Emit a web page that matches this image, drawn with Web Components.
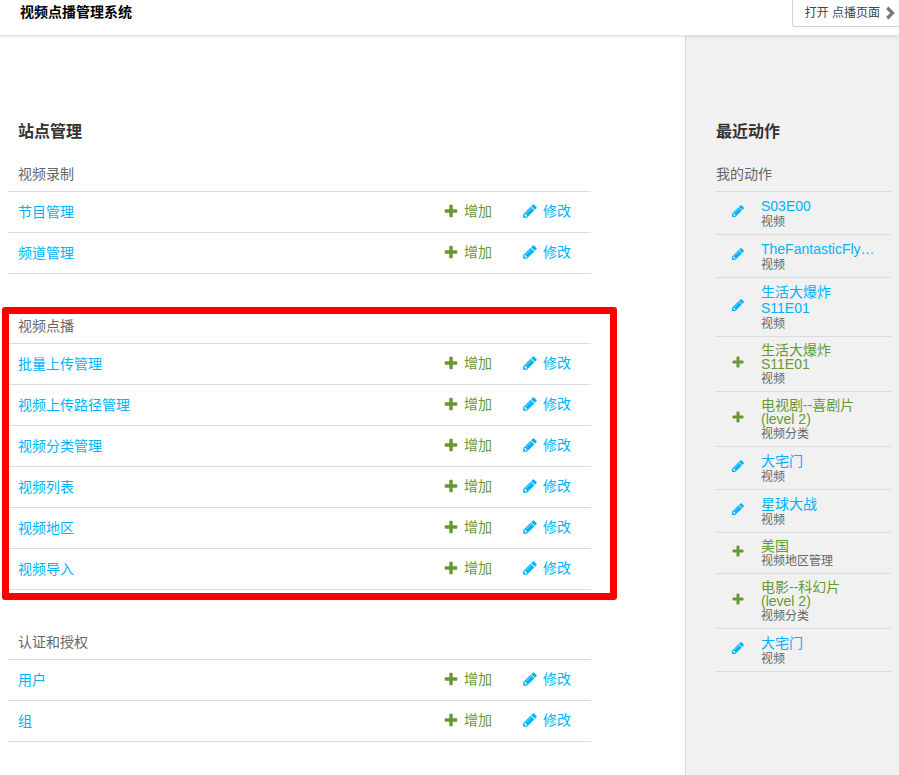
<!DOCTYPE html>
<html lang="zh-CN">
<head>
<meta charset="utf-8">
<meta name="viewport" content="width=device-width, initial-scale=1">
<title>视频点播管理系统</title>
<style>
  body {
    margin: 0;
    color: #666;
    background: #fff;
    font: 14px/16px "Liberation Sans", "Noto Sans CJK SC", sans-serif;
    --link: #00b2ff;
    --add: #669933;
    --line: #dbdbdb;
  }
</style>
</head>
<body>
<admin-page>
  <admin-header slot="header">
    视频点播管理系统
    <open-link slot="tools" href="#vod">打开 点播页面</open-link>
  </admin-header>
  <span slot="title">站点管理</span>
  <module-group name="视频录制" items="节目管理,频道管理"></module-group>
  <module-group name="视频点播" items="批量上传管理,视频上传路径管理,视频分类管理,视频列表,视频地区,视频导入" marked></module-group>
  <module-group name="认证和授权" items="用户,组"></module-group>
  <recent-actions slot="aside">
    <span slot="title">最近动作</span>
    <span slot="subtitle">我的动作</span>
    <action-entry kind="edit" type="视频">S03E00</action-entry>
    <action-entry kind="edit" type="视频">TheFantasticFly…</action-entry>
    <action-entry kind="edit" type="视频">生活大爆炸<br>S11E01</action-entry>
    <action-entry kind="add" type="视频">生活大爆炸<br>S11E01</action-entry>
    <action-entry kind="add" type="视频分类">电视剧--喜剧片<br>(level 2)</action-entry>
    <action-entry kind="edit" type="视频">大宅门</action-entry>
    <action-entry kind="edit" type="视频">星球大战</action-entry>
    <action-entry kind="add" type="视频地区管理">美国</action-entry>
    <action-entry kind="add" type="视频分类">电影--科幻片<br>(level 2)</action-entry>
    <action-entry kind="edit" type="视频">大宅门</action-entry>
  </recent-actions>
</admin-page>

<script>
class BaseElement extends HTMLElement {
  connectedCallback() {
    if (!this.shadowRoot) this.attachShadow({ mode: "open" }).innerHTML = this.render();
  }
}

const ICONS = {
  edit: ["0 0 1792 1792", "M491 1536l91-91-235-235-91 91v107h128v128h107zm523-928q0-22-22-22-10 0-17 7l-542 542q-7 7-7 17 0 22 22 22 10 0 17-7l542-542q7-7 7-17zm-54-192l416 416-832 832h-416v-416zm683 96q0 53-37 90l-166 166-416-416 166-165q36-38 90-38 53 0 91 38l235 234q37 39 37 91z"],
  add: ["0 0 1792 1792", "M1600 796v192q0 40-28 68t-68 28h-416v416q0 40-28 68t-68 28h-192q-40 0-68-28t-28-68v-416h-416q-40 0-68-28t-28-68v-192q0-40 28-68t68-28h416v-416q0-40 28-68t68-28h192q40 0 68 28t28 68v416h416q40 0 68 28t28 68z"],
  next: ["0 0 16 16", "M5.4 1.6L11.8 8l-6.4 6.4-2.3-2.3L7.2 8 3.1 3.9z"]
};

customElements.define("ui-icon", class extends BaseElement {
  render() {
    const [box, path] = ICONS[this.getAttribute("name")];
    return `<style>
      :host { display: block; flex: none; width: 16px; height: 16px; }
      svg { display: block; width: 100%; height: 100%; fill: currentColor; }
    </style><svg viewBox="${box}" aria-hidden="true"><path d="${path}"/></svg>`;
  }
});

customElements.define("admin-page", class extends BaseElement {
  render() {
    return `<style>
      :host { display: flex; flex-direction: column; min-height: 100vh; }
      .body { flex: 1; display: grid; grid-template-columns: minmax(0, 1fr) 214px; }
      main { padding: 86px 94px 33px 8px; }
      h1 { margin: 0 0 14px; padding: 0 10px; color: #333; font-size: 16px; line-height: 20px; font-weight: bold; }
      .groups { display: grid; gap: 34px; }
    </style>
    <slot name="header"></slot>
    <div class="body">
      <main><h1><slot name="title"></slot></h1><div class="groups"><slot></slot></div></main>
      <slot name="aside"></slot>
    </div>`;
  }
});

customElements.define("admin-header", class extends BaseElement {
  render() {
    return `<style>
      :host { display: block; position: relative; z-index: 1; background: #fff;
              border-bottom: 1px solid #e2e2e2; box-shadow: 0 1px 3px rgba(0,0,0,.1); }
      header { display: flex; justify-content: space-between; align-items: flex-start; height: 35px; }
      .brand { padding: 4px 20px; color: #000; font-weight: bold; }
    </style>
    <header><div class="brand"><slot></slot></div><slot name="tools"></slot></header>`;
  }
});

customElements.define("open-link", class extends BaseElement {
  render() {
    return `<style>
      :host { display: block; }
      a { display: flex; align-items: center; gap: 3px; height: 26px; padding: 0 0 0 12px;
          border: 1px solid #d4d4d4; border-width: 0 0 1px 1px; border-radius: 0 0 0 3px;
          color: #444; font-size: 12px; text-decoration: none; }
      ui-icon { color: #777; }
    </style>
    <a href="${this.getAttribute("href")}"><slot></slot><ui-icon name="next"></ui-icon></a>`;
  }
});

customElements.define("module-group", class extends BaseElement {
  render() {
    const rows = this.getAttribute("items").split(",").map(item => `<tr>
      <th scope="row"><a href="#list">${item}</a></th>
      <td><div class="tools">
        <a class="add" href="#add"><ui-icon name="add"></ui-icon>增加</a>
        <a href="#change"><ui-icon name="edit"></ui-icon>修改</a>
      </div></td></tr>`).join("");
    return `<style>
      :host { display: block; position: relative; }
      :host([marked])::after { content: ""; position: absolute; inset: -1px -26px -10px -6px;
        border: 7px solid #f00; border-radius: 3px; pointer-events: none; }
      table { width: 100%; border-collapse: separate; border-spacing: 0; }
      caption { padding: 2px 10px 0; text-align: left; line-height: 33px; }
      th, td { height: 40px; padding: 0; border-bottom: 1px solid var(--line); }
      tr:first-child > * { border-top: 1px solid var(--line); }
      th { padding-left: 10px; text-align: left; font-weight: normal; }
      .tools { display: flex; justify-content: flex-end; gap: 30px; padding: 0 20px 2px 0; }
      a { color: var(--link); text-decoration: none; }
      .tools a { display: flex; align-items: center; gap: 5px; }
      a.add { color: var(--add); }
    </style>
    <table><caption>${this.getAttribute("name")}</caption><tbody>${rows}</tbody></table>`;
  }
});

customElements.define("recent-actions", class extends BaseElement {
  render() {
    return `<style>
      :host { display: block; background: #f1f1f1; border-left: 1px solid #dbdbdb; }
      aside { padding: 86px 8px 32px 30px; }
      h2 { margin: 0 0 14px; color: #333; font-size: 16px; line-height: 20px; font-weight: bold; }
      h3 { margin: 0; padding-top: 2px; font-size: 14px; line-height: 33px; font-weight: normal; border-bottom: 1px solid var(--line); }
    </style>
    <aside><h2><slot name="title"></slot></h2><h3><slot name="subtitle"></slot></h3>
    <div role="list"><slot></slot></div></aside>`;
  }
});

customElements.define("action-entry", class extends BaseElement {
  render() {
    const kind = this.getAttribute("kind");
    this.setAttribute("role", "listitem");
    return `<style>
      :host { display: flex; align-items: center; gap: 16px; padding: 6px 15px 4px; border-bottom: 1px solid var(--line);
              color: var(--link); line-height: 16px; }
      :host([kind="add"]) { color: var(--add); line-height: 14px; }
      ui-icon { width: 14px; height: 14px; margin-bottom: 6px; }
      a { display: block; color: inherit; text-decoration: none; white-space: nowrap; }
      small { display: block; color: #666; font-size: 12px; line-height: 16px; white-space: nowrap; }
    </style>
    <ui-icon name="${kind}"></ui-icon>
    <div><a href="#entry"><slot></slot></a><small>${this.getAttribute("type")}</small></div>`;
  }
});
</script>
</body>
</html>
